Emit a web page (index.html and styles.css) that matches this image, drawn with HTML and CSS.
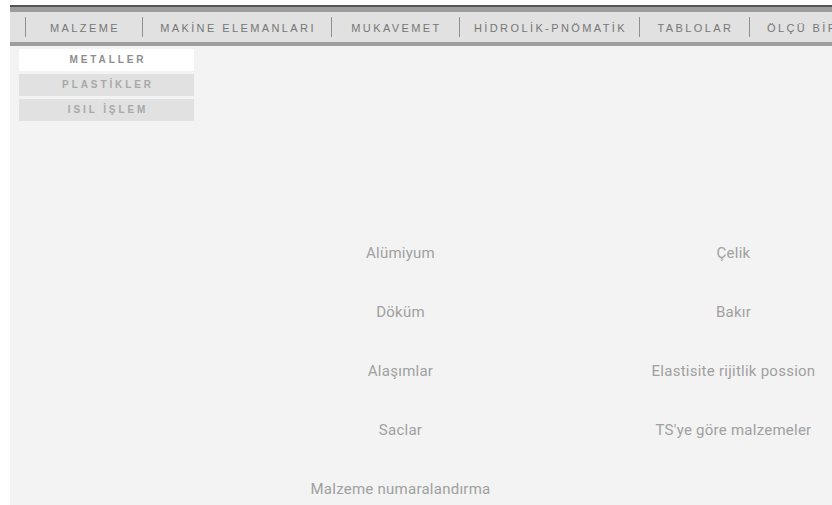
FILE: index.html
```html
<!DOCTYPE html>
<html lang="tr">
<head>
<meta charset="utf-8">
<title>Malzeme - Metaller</title>
<link rel="stylesheet" href="styles.css">
</head>
<body>
<div class="page">
  <header class="topbar">
    <nav class="mainnav">
      <a class="nav-item nav-item--malzeme" href="#">MALZEME</a>
      <a class="nav-item nav-item--makine" href="#">MAKİNE ELEMANLARI</a>
      <a class="nav-item nav-item--mukavemet" href="#">MUKAVEMET</a>
      <a class="nav-item nav-item--hidrolik" href="#">HİDROLİK-PNÖMATİK</a>
      <a class="nav-item nav-item--tablolar" href="#">TABLOLAR</a>
      <a class="nav-item nav-item--olcu" href="#">ÖLÇÜ BİRİMLERİ</a>
    </nav>
  </header>
  <div class="body">
    <aside class="sidebar">
      <a class="side-item side-item--active" href="#">METALLER</a>
      <a class="side-item" href="#">PLASTİKLER</a>
      <a class="side-item" href="#">ISIL İŞLEM</a>
    </aside>
    <main class="content">
      <ul class="topics">
        <li><a href="#">Alümiyum</a></li>
        <li><a href="#">Çelik</a></li>
        <li><a href="#">Döküm</a></li>
        <li><a href="#">Bakır</a></li>
        <li><a href="#">Alaşımlar</a></li>
        <li><a href="#">Elastisite rijitlik possion</a></li>
        <li><a href="#">Saclar</a></li>
        <li><a href="#">TS'ye göre malzemeler</a></li>
        <li><a href="#">Malzeme numaralandırma</a></li>
      </ul>
    </main>
  </div>
</div>
</body>
</html>
```

FILE: styles.css
```css
html, body {
  margin: 0;
  height: 100%;
  overflow: hidden;
}

body {
  background: #ffffff;
  padding: 5px 0 0 10px;
  box-sizing: border-box;
  font-family: "Liberation Sans", Arial, sans-serif;
}

a {
  text-decoration: none;
  color: inherit;
}

.page {
  width: 1000px;
  min-height: 100%;
  background: #f3f3f3;
}

/* top navigation bar */
.topbar {
  border-top: 2px solid #535353;
}

.mainnav {
  display: flex;
  align-items: center;
  height: 30px;
  padding-left: 15px;
  background: #e1e1e1;
  border-top: 5px solid #9d9d9d;
  border-bottom: 4px solid #9d9d9d;
}

.nav-item {
  flex: none;
  box-sizing: border-box;
  height: 20px;
  padding-top: 1px;
  line-height: 20px;
  border-left: 1px solid #8f8f8f;
  text-align: center;
  text-indent: 2px;
  font-size: 11px;
  letter-spacing: 2.4px;
  color: #767676;
  white-space: nowrap;
}

.nav-item--malzeme  { width: 117px; }
.nav-item--makine   { width: 189px; }
.nav-item--mukavemet { width: 128px; }
.nav-item--hidrolik { width: 180px; }
.nav-item--tablolar { width: 110px; }
.nav-item--olcu     { padding-left: 17px; text-align: left; text-indent: 0; }

/* page body: side menu + topic grid */
.body {
  display: flex;
  align-items: flex-start;
}

.sidebar {
  display: flex;
  flex-direction: column;
  gap: 3px;
  width: 175px;
  margin: 3px 0 0 9px;
}

.side-item {
  display: block;
  height: 22px;
  line-height: 22px;
  background: #e1e1e1;
  text-align: center;
  text-indent: 3px;
  font-size: 10px;
  font-weight: bold;
  letter-spacing: 2.9px;
  color: #a8a8a8;
}

.side-item--active {
  background: #ffffff;
  color: #8e8e8e;
}

.content {
  padding: 178px 0 0 40px;
}

.topics {
  list-style: none;
  margin: 0;
  padding: 0;
  display: grid;
  grid-template-columns: 333px 333px;
  grid-auto-rows: 59px;
}

.topics li {
  text-align: center;
  line-height: 59px;
  font-family: Roboto, "Noto Sans", sans-serif;
  font-size: 15px;
  letter-spacing: 0.25px;
  color: #a0a0a0;
  white-space: nowrap;
}
```
